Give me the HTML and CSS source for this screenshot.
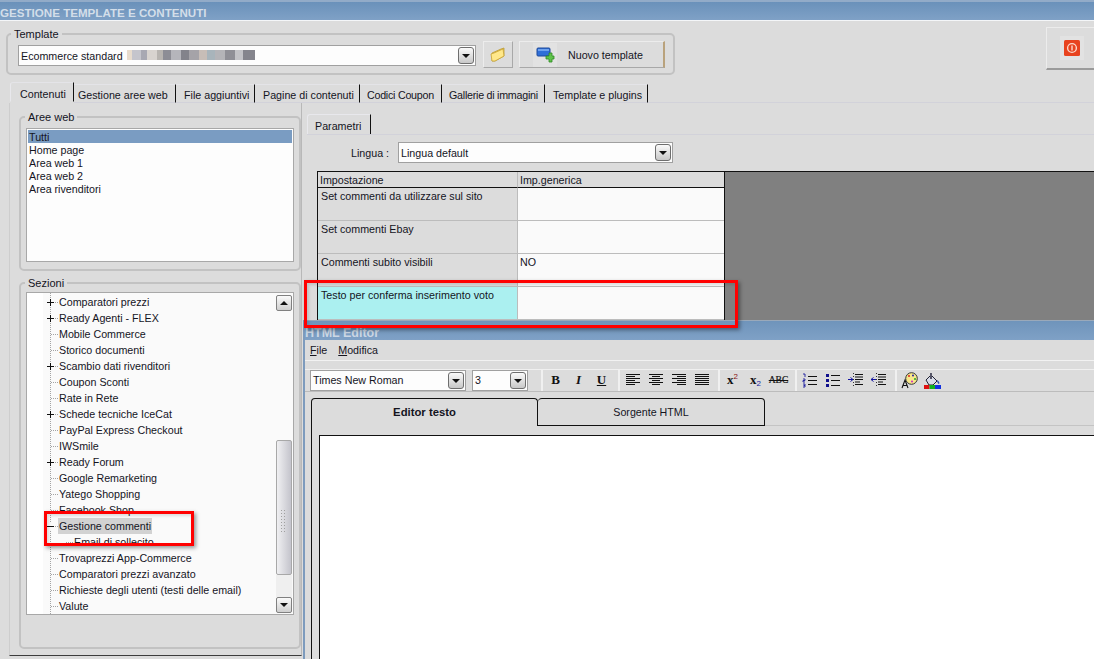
FILE: index.html
```html
<!DOCTYPE html>
<html lang="it">
<head>
<meta charset="utf-8">
<title>Gestione template e contenuti</title>
<link rel="stylesheet" href="styles.css">
</head>
<body>
<div class="app">
  <header class="titlebar">GESTIONE TEMPLATE E CONTENUTI</header>

  <div class="toprow">
    <fieldset class="group tplgroup">
      <legend>Template</legend>
      <div class="tplrow">
        <div class="combo tplcombo">
          <span class="combotext combotext-low">Ecommerce standard</span><span class="mosaic"></span>
          <span class="arrow"></span>
        </div>
        <button class="btn folderbtn" type="button">
          <svg width="16" height="16" viewBox="0 0 16 16"><path d="M2 6l9-4 3-1 0 8-9 5-3 0z" fill="#eec444" stroke="#b89a3a" stroke-width=".8"/><path d="M1 7l3-1 9-4 1 7-9 5-3 0z" fill="#ffe88a" stroke="#c9a63a" stroke-width=".8"/></svg>
        </button>
        <button class="btn newbtn" type="button">
          <span class="iconbox">
            <svg width="19" height="16" viewBox="0 0 19 16"><rect x="1" y="1" width="13" height="8" rx="1" fill="#2f6fd8" stroke="#1f4a9a"/><rect x="2" y="2" width="11" height="2" fill="#6ea2ee"/><path d="M11 6h3V3h3v3h2v3h-2v3h-3V9h-3z" transform="translate(-1 3)" fill="#5fc24a" stroke="#2d8a23" stroke-width=".8"/></svg>
          </span>
          <span>Nuovo template</span>
        </button>
      </div>
    </fieldset>
    <button class="exitbtn" type="button">
      <span class="exitbox">
        <svg width="16" height="16" viewBox="0 0 16 16"><rect width="16" height="16" rx="1.5" fill="#e8431f"/><circle cx="8" cy="8" r="4.4" fill="none" stroke="#fbd9cc" stroke-width="1.4"/><rect x="7.3" y="5.5" width="1.4" height="5" fill="#fbd9cc"/></svg>
      </span>
    </button>
  </div>

  <nav class="maintabs">
    <span class="mtab mtab-active">Contenuti</span>
    <span class="mtab mtab-second">Gestione aree web</span>
    <span class="mtab">File aggiuntivi</span>
    <span class="mtab">Pagine di contenuti</span>
    <span class="mtab mtab-tight">Codici Coupon</span>
    <span class="mtab mtab-tight">Gallerie di immagini</span>
    <span class="mtab">Template e plugins</span>
    <span class="mtab-rest"></span>
  </nav>

  <div class="content">
    <aside class="leftcol">
      <fieldset class="group areegroup">
        <legend>Aree web</legend>
        <ul class="listbox">
          <li class="listitem listitem-sel">Tutti</li>
          <li class="listitem">Home page</li>
          <li class="listitem">Area web 1</li>
          <li class="listitem">Area web 2</li>
          <li class="listitem">Area rivenditori</li>
        </ul>
      </fieldset>
      <fieldset class="group sezgroup">
        <legend>Sezioni</legend>
        <div class="tree">
          <ul class="treelist">
            <li class="row plus"><span class="lbl">Comparatori prezzi</span></li>
            <li class="row plus"><span class="lbl">Ready Agenti - FLEX</span></li>
            <li class="row"><span class="lbl">Mobile Commerce</span></li>
            <li class="row"><span class="lbl">Storico documenti</span></li>
            <li class="row plus"><span class="lbl">Scambio dati rivenditori</span></li>
            <li class="row"><span class="lbl">Coupon Sconti</span></li>
            <li class="row"><span class="lbl">Rate in Rete</span></li>
            <li class="row plus"><span class="lbl">Schede tecniche IceCat</span></li>
            <li class="row"><span class="lbl">PayPal Express Checkout</span></li>
            <li class="row"><span class="lbl">IWSmile</span></li>
            <li class="row plus"><span class="lbl">Ready Forum</span></li>
            <li class="row"><span class="lbl">Google Remarketing</span></li>
            <li class="row"><span class="lbl">Yatego Shopping</span></li>
            <li class="row"><span class="lbl">Facebook Shop</span></li>
            <li class="row minus"><span class="lbl lbl-sel">Gestione commenti</span></li>
            <li class="row child"><span class="lbl">Email di sollecito</span></li>
            <li class="row"><span class="lbl">Trovaprezzi App-Commerce</span></li>
            <li class="row"><span class="lbl">Comparatori prezzi avanzato</span></li>
            <li class="row"><span class="lbl">Richieste degli utenti (testi delle email)</span></li>
            <li class="row"><span class="lbl">Valute</span></li>
          </ul>
          <div class="scroll">
            <span class="sbtn"><span class="tri-up"></span></span>
            <span class="strack-a"></span>
            <span class="sthumb"><span class="grip"></span></span>
            <span class="strack-b"></span>
            <span class="sbtn"><span class="tri-down"></span></span>
          </div>
        </div>
      </fieldset>
    </aside>

    <main class="rightcol">
      <div class="paramtabs"><span class="ptab">Parametri</span></div>
      <div class="linguarow">
        <span class="linguralabel">Lingua :</span>
        <div class="combo linguacombo"><span class="combotext combotext-low">Lingua default</span><span class="arrow"></span></div>
      </div>
      <div class="gridarea">
        <div class="grid">
          <div class="gh gh1">Impostazione</div>
          <div class="gh">Imp.generica</div>
          <div class="gk">Set commenti da utilizzare sul sito</div><div class="gv"></div>
          <div class="gk">Set commenti Ebay</div><div class="gv"></div>
          <div class="gk">Commenti subito visibili</div><div class="gv">NO</div>
          <div class="gk gk-hl">Testo per conferma inserimento voto</div><div class="gv"></div>
        </div>
        <div class="gridempty"></div>
      </div>

      <section class="editor">
        <div class="edtitle">HTML Editor</div>
        <div class="edmenu"><span><u>F</u>ile</span><span><u>M</u>odifica</span></div>
        <div class="edtoolbar">
          <div class="combo fontcombo"><span class="combotext">Times New Roman</span><span class="arrow"></span></div>
          <div class="combo sizecombo"><span class="combotext">3</span><span class="arrow"></span></div>
          <span class="sep sep-first"></span>
          <span class="tool tb">B</span>
          <span class="tool ti">I</span>
          <span class="tool tu">U</span>
          <span class="sep"></span>
          <span class="tool"><svg width="16" height="14" viewBox="0 0 16 14"><path d="M1 1.5h14M1 3.5h9M1 5.5h14M1 7.5h9M1 9.5h14M1 11.5h9" stroke="#111" fill="none"/></svg></span>
          <span class="tool"><svg width="16" height="14" viewBox="0 0 16 14"><path d="M1 1.5h14M4 3.5h8M1 5.5h14M4 7.5h8M1 9.5h14M4 11.5h8" stroke="#111" fill="none"/></svg></span>
          <span class="tool"><svg width="16" height="14" viewBox="0 0 16 14"><path d="M1 1.5h14M6 3.5h9M1 5.5h14M6 7.5h9M1 9.5h14M6 11.5h9" stroke="#111" fill="none"/></svg></span>
          <span class="tool"><svg width="16" height="14" viewBox="0 0 16 14"><path d="M1 1.5h14M1 3.5h14M1 5.5h14M1 7.5h14M1 9.5h14M1 11.5h14" stroke="#111" fill="none"/></svg></span>
          <span class="sep"></span>
          <span class="tool tx">x<sup class="supr">2</sup></span>
          <span class="tool tx">x<sub class="subb">2</sub></span>
          <span class="tool tabc">ABC</span>
          <span class="sep"></span>
          <span class="tool"><svg width="16" height="15" viewBox="0 0 16 15"><path d="M6 3.5h9M6 7.5h9M6 11.5h9" stroke="#111" fill="none"/><path d="M1 1h2v3M1 6h2v1.500H1v1.500h2M1 11h2v1.500H1.500M3 12.500v1.500H1" stroke="#1a1a9c" fill="none" stroke-width=".9"/></svg></span>
          <span class="tool"><svg width="16" height="15" viewBox="0 0 16 15"><path d="M6 2.500h9M6 7.500h9M6 12.500h9" stroke="#111" fill="none"/><path d="M1 1h3v3H1zM1 6h3v3H1zM1 11h3v3H1z" fill="#10108c"/></svg></span>
          <span class="tool"><svg width="17" height="15" viewBox="0 0 17 15"><path d="M8 1.500h8M8 4h8M8 6.500h8M8 9h5M8 11.500h8" stroke="#111" fill="none" stroke-width="1.200"/><path d="M1 6.500h5M3.500 4.500l2.500 2-2.500 2" stroke="#1212a0" fill="none"/><path d="M6.500 0v15" stroke="#333" stroke-dasharray="1 2"/></svg></span>
          <span class="tool"><svg width="17" height="15" viewBox="0 0 17 15"><path d="M8 1.500h8M8 4h8M8 6.500h8M8 9h5M8 11.500h8" stroke="#111" fill="none" stroke-width="1.200"/><path d="M6 6.500H1M3.500 4.500l-2.500 2 2.500 2" stroke="#1212a0" fill="none"/><path d="M6.500 0v15" stroke="#333" stroke-dasharray="1 2"/></svg></span>
          <span class="sep"></span>
          <span class="tool"><svg width="17" height="17" viewBox="0 0 17 17"><circle cx="10.500" cy="6.500" r="5.800" fill="#f7e88a" stroke="#333"/><circle cx="8" cy="4" r="1" fill="#d22"/><circle cx="12" cy="3.500" r="1" fill="#22a"/><circle cx="14" cy="7" r="1" fill="#2a2"/><circle cx="11" cy="9.500" r="1" fill="#c2c"/><path d="M1 16l3-8 3 8M2.300 13.500h3.500" stroke="#111" fill="none" stroke-width="1.100"/></svg></span>
          <span class="tool"><svg width="17" height="17" viewBox="0 0 17 17"><path d="M2 8l5-5 6 6-4 4H5z" fill="#d8dce8" stroke="#223"/><path d="M6 1h2v6H6z" fill="#556" /><path d="M13 8c2 1 3 3 2 4-1 0-2-2-2-4z" fill="#2b4fb0"/><rect y="13" width="5.500" height="4" fill="#e01010"/><rect x="5.500" y="13" width="5.500" height="4" fill="#10b020"/><rect x="11" y="13" width="6" height="4" fill="#1030e0"/></svg></span>
        </div>
        <div class="edtabs">
          <span class="etab etab-active">Editor testo</span>
          <span class="etab etab-off">Sorgente HTML</span>
          <span class="etab-rest"></span>
        </div>
        <div class="edbody"><div class="edbox"></div></div>
      </section>
    </main>
  </div>

  <div class="anno anno-table"></div>
  <div class="anno anno-tree"></div>
</div>
</body>
</html>
```

FILE: styles.css
```css
* { box-sizing: border-box; }
html, body { margin: 0; padding: 0; }
body { background: #dcdcdc; overflow: hidden; }
.app {
  position: relative;
  width: 1094px;
  height: 659px;
  overflow: hidden;
  display: flex;
  flex-direction: column;
  background: #dcdcdc;
  color: #14141e;
  font: 10.7px/14px "Liberation Sans", sans-serif;
}
ul { list-style: none; margin: 0; padding: 0; }
button { font: inherit; color: inherit; padding: 0; margin: 0; }

.titlebar {
  height: 21px;
  flex: none;
  border-top: 2px solid #92abc8;
  border-bottom: 1px solid #f4f6f8;
  background: linear-gradient(#6a91ba, #7fa1c6);
  color: #d3dee9;
  font: bold 11.6px/21px "Liberation Sans", sans-serif;
  white-space: nowrap;
}

.toprow {
  flex: none;
  display: flex;
  justify-content: space-between;
  align-items: flex-start;
  height: 48px;
  margin-top: 6px;
  padding-left: 6px;
}
.group {
  margin: 0;
  padding: 0 5px;
  border: 2px solid #c2c2c2;
  border-radius: 5px;
  min-width: 0;
}
.group legend {
  margin-left: -1px;
  padding: 0 3px;
  line-height: 14px;
  font-size: 11px;
}
.tplgroup { width: 669px; height: 48px; padding: 0 8px 0 10px; }
.tplgroup legend { margin-left: -7px; }
.tplrow { display: flex; align-items: center; gap: 6px; height: 27px; }
.tplrow > * { flex: none; }

.combo {
  display: flex;
  align-items: center;
  position: relative;
  height: 21px;
  background: #fdfdfd;
  border: 1px solid #a0a0a0;
  padding-left: 2px;
  white-space: nowrap;
}
.combotext { line-height: 19px; }
.combotext-low { padding-top: 2px; }
.arrow {
  position: absolute;
  right: 1px;
  top: 1px;
  width: 16px;
  height: 17px;
  border: 1px solid #6e6e6e;
  border-radius: 3px;
  background: linear-gradient(#fafafa, #c8c8c8);
}
.arrow::after {
  content: "";
  position: absolute;
  left: 3px;
  top: 6px;
  border: 4px solid transparent;
  border-top: 4px solid #111;
  border-bottom: 0;
}
.tplcombo { width: 458px; margin-right: 1px; margin-top: 1px; }
.mosaic {
  display: block;
  width: 128px;
  height: 10px;
  margin-left: 4px;
  background: linear-gradient(90deg, #e8dccd 0 5px, #c5c5cc 5px 14px, #a8a8b2 14px 20px, #d8d3cf 20px 30px, #b8b4b0 30px 36px, #8d8d95 36px 44px, #b5b5bb 44px 54px, #83838b 54px 62px, #a5a3a8 62px 72px, #c7bdb7 72px 80px, #a8b4bb 80px 88px, #b4b4b8 88px 98px, #8f8f96 98px 108px, #c3c3c7 108px 116px, #85858d 116px 128px);
}

.btn {
  height: 27px;
  display: flex;
  align-items: center;
  background: #dcdcdc;
  border: 1px solid;
  border-color: #ececec #a8a8a8 #a8a8a8 #ececec;
}
.folderbtn { width: 30px; justify-content: center; }
.newbtn { width: 146px; padding-top: 1px; border-right: 2px solid #b9a27c; }
.iconbox {
  display: flex;
  align-items: center;
  justify-content: center;
  width: 24px;
  height: 24px;
  margin: 0 11px 0 13px;
  background: #e2e2e2;
}

.exitbtn {
  width: 48px;
  height: 43px;
  display: flex;
  align-items: center;
  background: #dcdcdc;
  border: 1px solid #ececec;
  border-right: 0;
  border-bottom: 2px solid #9a9a9a;
  padding-left: 13px;
}
.exitbox {
  display: flex;
  align-items: center;
  justify-content: center;
  width: 24px;
  height: 24px;
  background: #e2e2e2;
}

.maintabs {
  flex: none;
  display: grid;
  grid-template-columns: 64px 102px 79px 105px 82px 103px 103px 1fr;
  height: 21px;
  margin-top: 7px;
  margin-left: 10px;
}
.mtab {
  margin-top: 2px;
  height: 19px;
  padding: 3px 0 0 8px;
  line-height: 14px;
  border-top: 1px solid #e4e4e8;
  border-right: 1px solid #111;
  border-bottom: 1px solid #d2d2da;
  white-space: nowrap;
}
.mtab-active {
  margin-top: 0;
  height: 20px;
  padding: 4px 0 0 9px;
  border-bottom-color: #dcdcdc;
  border-left: 1px solid #e8e8ec;
  border-radius: 3px 0 0 0;
}
.mtab-second { padding-left: 4px; }
.mtab-tight { letter-spacing: -.25px; padding-left: 7px; }
.mtab-rest { border-bottom: 1px solid #d2d2da; height: 19px; margin-top: 2px; }

.content {
  flex: 1;
  min-height: 0;
  display: flex;
  align-items: flex-start;
}

.leftcol {
  flex: none;
  width: 293px;
  margin-left: 9px;
  height: 553px;
  padding: 7px 0 0 9px;
  border-left: 1px solid #cdcdcd;
  border-right: 1px solid #b8b8b8;
  border-bottom: 1px solid #3c3c3c;
}
.areegroup { width: 282px; height: 161px; }
.sezgroup { width: 282px; height: 373px; margin-top: 5px; }
.areegroup .listbox { margin-top: 4px; }
.listbox {
  width: 268px;
  height: 134px;
  background: #fdfdfd;
  border: 1px solid #a8a8a8;
  padding: 1px;
}
.listitem { height: 13px; line-height: 15px; padding-left: 1px; }
.listitem-sel { background: #7a9cc2; }

.tree {
  display: flex;
  width: 268px;
  height: 323px;
  margin-top: 2px;
  background: #fafafa;
  border: 1px solid #a8a8a8;
}
.treelist {
  flex: 1;
  padding-top: 1px;
  overflow: hidden;
  background:
    repeating-linear-gradient(to bottom, #a4a4a4 0 1px, transparent 1px 2px) 23px 0 / 1px 100% no-repeat,
    linear-gradient(#fff, #fff) 0 0 / 16px 100% no-repeat;
}
.row {
  position: relative;
  height: 16px;
  padding-left: 31px;
  line-height: 16px;
  white-space: nowrap;
}
.row::before {
  content: "";
  position: absolute;
  left: 24px;
  top: 8px;
  width: 7px;
  height: 1px;
  background: repeating-linear-gradient(to right, #a4a4a4 0 1px, transparent 1px 2px);
}
.plus::after, .minus::after {
  content: "";
  position: absolute;
  left: 20px;
  top: 5px;
  width: 7px;
  height: 7px;
  background: linear-gradient(#111, #111) 0 3px / 7px 1px no-repeat, linear-gradient(#111, #111) 3px 0 / 1px 7px no-repeat, #fafafa;
}
.minus::after { background: linear-gradient(#111, #111) 0 3px / 7px 1px no-repeat, #fafafa; }
.lbl { display: inline-block; height: 16px; padding: 0 1px; }
.lbl-sel { background: #d2d2d2; }
.child { padding-left: 46px; }
.child::before { left: 39px; }

.scroll {
  flex: none;
  display: flex;
  flex-direction: column;
  width: 16px;
  margin: 2px 1px 1px 0;
}
.sbtn {
  flex: none;
  position: relative;
  height: 16px;
  background: linear-gradient(#fafafa, #cfcfcf);
  border: 1px solid #808080;
  border-radius: 2px;
}
.tri-up, .tri-down {
  position: absolute;
  left: 3px;
  top: 5px;
  border: 4px solid transparent;
}
.tri-up { border-bottom: 4px solid #111; border-top: 0; }
.tri-down { border-top: 4px solid #111; border-bottom: 0; }
.strack-a { height: 129px; flex: none; background: #fafafa; }
.sthumb {
  flex: none;
  height: 135px;
  display: flex;
  align-items: center;
  justify-content: center;
  background: linear-gradient(90deg, #f0f0f2, #c4c4cc);
  border: 1px solid #a8a8a8;
  border-radius: 2px;
}
.grip {
  width: 6px;
  height: 22px;
  margin-top: 26px;
  background: repeating-linear-gradient(to bottom, #a0a0a0 0 1px, transparent 1px 3px);
  -webkit-mask: repeating-linear-gradient(to right, #000 0 1px, transparent 1px 3px);
  mask: repeating-linear-gradient(to right, #000 0 1px, transparent 1px 3px);
}
.strack-b { flex: 1; background: #efefef; }

.rightcol {
  flex: 1;
  min-width: 0;
  height: 100%;
  display: flex;
  flex-direction: column;
}
.paramtabs {
  flex: none;
  height: 21px;
  margin-top: 11px;
  margin-left: 5px;
  border-bottom: 1px solid #d2d2da;
}
.ptab {
  display: block;
  width: 64px;
  height: 20px;
  padding: 4px 0 0 7px;
  border-right: 1px solid #111;
  border-top: 1px solid #e8e8ec;
  border-left: 1px solid #e8e8ec;
  border-radius: 3px 0 0 0;
}
.linguarow {
  flex: none;
  display: flex;
  align-items: center;
  height: 21px;
  margin-top: 7px;
  padding-left: 49px;
}
.linguralabel { width: 47px; }
.linguacombo { width: 275px; }

.gridarea {
  flex: none;
  display: flex;
  height: 149px;
  margin-top: 8px;
  padding-left: 15px;
}
.grid {
  flex: none;
  display: grid;
  grid-template-columns: 200px 206px;
  grid-template-rows: 16px repeat(4, 33px);
  width: 408px;
  border: 1px solid #111;
  border-bottom: 0;
}
.gh {
  padding: 1px 0 0 2px;
  line-height: 14px;
  border-bottom: 1px solid #111;
  background: #dcdcdc;
}
.gh1 { border-right: 1px solid #bcbcbc; }
.gk, .gv {
  padding: 1px 2px 1px 3px;
  line-height: 14px;
  border-bottom: 1px solid #bcbcbc;
}
.gv { padding-left: 2px; }
.gk { border-right: 1px solid #bcbcbc; background: #dcdcdc; }
.gv { background: #fafafa; }
.gk-hl { background: #abf0f0; }
.gridempty {
  flex: 1;
  background: #808080;
  border-top: 1px solid #111;
}

.editor {
  flex: 1;
  min-height: 0;
  display: flex;
  flex-direction: column;
  margin-left: 1px;
  border-left: 2px solid #7d9bbd;
  border-top: 1px solid #9aa9ba;
}
.edtitle {
  flex: none;
  height: 19px;
  padding-top: 3px;
  background: linear-gradient(#6f94bb, #7fa1c6);
  color: #ccd7e4;
  font: bold 12.5px/18px "Liberation Sans", sans-serif;
}
.edmenu {
  flex: none;
  display: flex;
  gap: 11px;
  height: 21px;
  padding: 3px 0 0 5px;
  border-bottom: 1px solid #f2f2f2;
  line-height: 15px;
}
.edtoolbar {
  flex: none;
  display: flex;
  align-items: center;
  height: 31px;
  padding: 0 0 0 5px;
  border-bottom: 1px solid #bcbcbc;
  background: linear-gradient(#f0f0f0, #f0f0f0) 0 8px / 100% 1px no-repeat;
}
.fontcombo { width: 156px; margin-top: 8px; }
.sizecombo { width: 56px; margin-left: 6px; margin-top: 8px; }
.sep {
  flex: none;
  width: 2px;
  height: 21px;
  margin: 8px 1px 0 5px;
  background: #f0f0f0;
}
.sep-first { margin-left: 13px; }
.tool {
  flex: none;
  display: flex;
  align-items: center;
  justify-content: center;
  width: 23px;
  height: 21px;
  margin-top: 8px;
  font: bold 13px/14px "Liberation Serif", serif;
  color: #111;
}
.ti { font-style: italic; }
.tu { text-decoration: underline; }
.tx { font-size: 13px; }
.supr, .subb { font: 8px/8px "Liberation Sans", sans-serif; }
.supr { color: #8a1010; margin-bottom: 6px; align-self: center; }
.subb { color: #1a1aa0; margin-top: 7px; }
.tabc {
  font: 9.5px/14px "Liberation Serif", serif;
  -webkit-text-stroke: .2px #111;
  text-decoration: line-through;
}

.edtabs {
  flex: none;
  display: flex;
  height: 28px;
  margin-top: 6px;
  padding-left: 6px;
  align-items: flex-start;
}
.etab {
  height: 28px;
  text-align: center;
  line-height: 26px;
  border-top: 1px solid #111;
  border-right: 1px solid #111;
}
.etab-active {
  width: 227px;
  border-left: 1px solid #111;
  border-radius: 4px 4px 0 0;
  font-weight: 700;
  font-size: 11.3px;
}
.etab-off {
  width: 227px;
  border-bottom: 1px solid #111;
  border-radius: 4px 4px 0 0;
}
.etab-rest {
  flex: 1;
  height: 28px;
  border-bottom: 1px solid #c4c4c4;
}
.edbody {
  flex: 1;
  min-height: 0;
  display: flex;
  margin-left: 6px;
  padding: 9px 0 0 7px;
  border-left: 1px solid #111;
}
.edbox {
  flex: 1;
  background: #fff;
  border-top: 1px solid #111;
  border-left: 1px solid #111;
}

.anno {
  position: absolute;
  border: 3px solid #f00;
  box-shadow: 2px 2px 4px rgba(0, 0, 0, .4), inset 2px 2px 3px rgba(0, 0, 0, .12);
}
.anno-table { left: 304px; top: 280px; width: 434px; height: 48px; }
.anno-tree { left: 44px; top: 511px; width: 150px; height: 35px; }
```
